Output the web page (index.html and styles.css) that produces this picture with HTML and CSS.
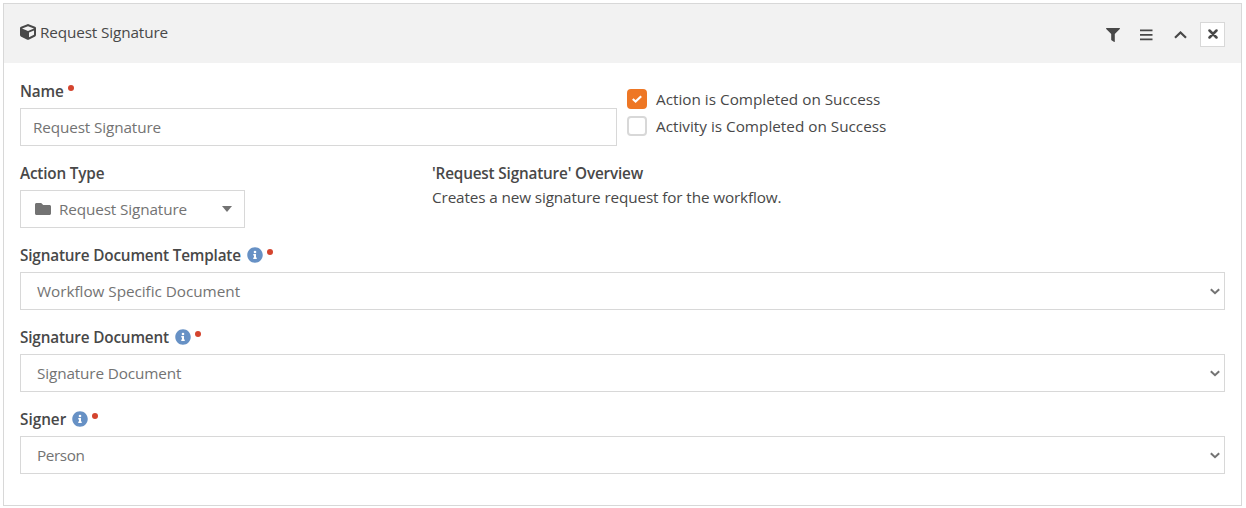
FILE: index.html
```
<!DOCTYPE html>
<html lang="en">
<head>
<meta charset="utf-8">
<title>Request Signature</title>
<link rel="stylesheet" href="styles.css">
</head>
<body>
<svg width="0" height="0" class="sprite">
  <symbol id="info" viewBox="0 0 512 512"><path fill="currentColor" d="M256 8C119 8 8 119 8 256s111 248 248 248 248-111 248-248S393 8 256 8zm0 110a42 42 0 1 1 0 84 42 42 0 0 1 0-84zm56 254c0 7-5 12-12 12h-88c-7 0-12-5-12-12v-24c0-7 5-12 12-12h12v-64h-12c-7 0-12-5-12-12v-24c0-7 5-12 12-12h64c7 0 12 5 12 12v100h12c7 0 12 5 12 12z"/></symbol>
  <symbol id="arrow" viewBox="0 0 10 7"><path fill="none" stroke="currentColor" stroke-width="2" d="M.8 1.2 5 5.2l4.200-4"/></symbol>
</svg>
<section class="panel">
  <header class="panel-header">
    <h1 class="title">
      <svg class="cube" viewBox="0 0 512 512"><path fill="currentColor" fill-rule="evenodd" d="M239 6 31 84C12 91 0 109 0 129v225c0 18 10 35 26 43l208 104c14 7 30 7 43 0l208-104c16-8 27-25 27-43V129c0-20-12-38-31-45L273 6c-11-4-23-4-34 0zM256 68l192 72v2l-192 78-192-78v-2zm32 357V275l160-65v135z"/></svg>
      <span>Request Signature</span>
    </h1>
    <div class="tools">
      <button class="tool" aria-label="Filter"><svg width="14" height="14" viewBox="0 0 14 14"><path fill="currentColor" d="M.6 0h12.800c.6 0 .8.600.4 1L8.800 6v7.400c0 .5-.6.700-1 .4L5.500 12.200a.7.7 0 0 1-.3-.5V6L.2 1C-.2.6.1 0 .6 0z"/></svg></button>
      <button class="tool" aria-label="Reorder"><svg width="13" height="12" viewBox="0 0 13 12"><path fill="currentColor" d="M0 .5h12.500v1.800H0zM0 5h12.500v1.800H0zM0 9.500h12.500v1.800H0z"/></svg></button>
      <button class="tool" aria-label="Collapse"><svg width="13" height="8" viewBox="0 0 13 8"><path fill="none" stroke="currentColor" stroke-width="2.200" d="m1 6.800 5.500-5.300L12 6.800"/></svg></button>
      <button class="tool close" aria-label="Remove"><svg width="10" height="10" viewBox="0 0 10 10"><path stroke="currentColor" stroke-width="2.500" stroke-linecap="round" d="m1.500 1.500 7 7m0-7-7 7"/></svg></button>
    </div>
  </header>
  <div class="panel-body">
    <div class="row">
      <div class="group name-group">
        <div class="label"><span>Name</span><i class="required"></i></div>
        <div class="control input"><span>Request Signature</span></div>
      </div>
      <div class="checks">
        <div class="check"><span class="box checked"><svg width="10" height="8" viewBox="0 0 10 8"><path fill="none" stroke="#fff" stroke-width="2.200" d="m.8 4 2.800 2.500L9.200 1.200"/></svg></span><span>Action is Completed on Success</span></div>
        <div class="check"><span class="box"></span><span>Activity is Completed on Success</span></div>
      </div>
    </div>
    <div class="row">
      <div class="group type-group">
        <div class="label"><span>Action Type</span></div>
        <div class="control picker">
          <svg width="16" height="12" viewBox="0 0 16 12"><path fill="currentColor" d="M1.500 0h4.700L8.200 2h6.300c.8 0 1.500.7 1.500 1.500v7c0 .8-.7 1.500-1.500 1.500h-13C.7 12 0 11.300 0 10.500v-9C0 .7.700 0 1.500 0z"/></svg>
          <span>Request Signature</span>
          <i class="caret"></i>
        </div>
      </div>
      <div class="overview">
        <div class="label"><span>'Request Signature' Overview</span></div>
        <p>Creates a new signature request for the workflow.</p>
      </div>
    </div>
    <div class="group">
      <div class="label"><span>Signature Document Template</span><svg class="info"><use href="#info"/></svg><i class="required"></i></div>
      <div class="control select"><span class="wide">Workflow Specific Document</span><svg class="arrow"><use href="#arrow"/></svg></div>
    </div>
    <div class="group">
      <div class="label"><span>Signature Document</span><svg class="info"><use href="#info"/></svg><i class="required"></i></div>
      <div class="control select"><span>Signature Document</span><svg class="arrow"><use href="#arrow"/></svg></div>
    </div>
    <div class="group">
      <div class="label short"><span>Signer</span><svg class="info"><use href="#info"/></svg><i class="required"></i></div>
      <div class="control select"><span class="tight">Person</span><svg class="arrow"><use href="#arrow"/></svg></div>
    </div>
  </div>
</section>
</body>
</html>
```
FILE: styles.css
```
* { box-sizing: border-box; }
body {
  margin: 0;
  padding: 3px 4px 2px 3px;
  height: 508px;
  overflow: hidden;
  background: #fff;
  color: #484848;
  font: 15.3px/24px "Open Sans", "Noto Sans", sans-serif;
  letter-spacing: -0.13px;
}
svg { display: block; flex: none; }
.sprite { position: absolute; }
.panel { height: 503px; border: 1px solid #d8d8d8; }
.panel-header {
  display: flex;
  justify-content: space-between;
  height: 59px;
  padding: 16px 16px 0;
  background: #f2f2f2;
}
.title {
  display: flex;
  gap: 4px;
  height: 24px;
  margin: 0;
  font-size: inherit;
  font-weight: 400;
}
.cube { width: 16px; height: 16px; margin-top: 4px; }
.tools { display: flex; gap: 9px; margin-top: 2px; }
.tool {
  display: flex;
  align-items: center;
  justify-content: center;
  width: 25px;
  height: 25px;
  padding: 0;
  border: 0;
  background: none;
  color: #484848;
}
.tool:not(.close) { padding-left: 4px; }
.close { border: 1px solid #d8d8d8; background: #fff; padding-bottom: 1px; }
.panel-body { padding: 16px 16px 0; }
.row { display: flex; }
.group { margin-bottom: 15px; }
.label {
  display: flex;
  align-items: center;
  height: 24px;
  margin-bottom: 5px;
  font-weight: 600;
  letter-spacing: -0.17px;
}
.short { letter-spacing: 0; }
.required {
  width: 6px;
  height: 6px;
  margin: -6px 0 0 4px;
  border-radius: 50%;
  background: #d4442e;
}
.info { width: 16px; height: 16px; margin-left: 6px; color: #6791c5; }
.control {
  display: flex;
  align-items: center;
  height: 38px;
  border: 1px solid #d8d8d8;
  color: #737373;
}
.name-group { width: 597px; }
.input { padding-left: 12px; }
.select { justify-content: space-between; padding: 0 4px 0 16px; }
.wide { letter-spacing: -0.04px; }
.tight { letter-spacing: -0.4px; }
.arrow { width: 10px; height: 7px; }
.checks { padding: 6px 0 0 10px; letter-spacing: 0; }
.check { display: flex; align-items: center; gap: 9px; height: 27px; }
.box {
  display: flex;
  align-items: center;
  justify-content: center;
  width: 20px;
  height: 20px;
  border: 2px solid #d8d8d8;
  border-radius: 4px;
}
.checked { border-color: #ee7725; background: #ee7725; }
.type-group { width: 225px; }
.picker { gap: 8px; padding: 0 12px 0 14px; }
.caret {
  margin-left: auto;
  border: 5px solid transparent;
  border-top: 6px solid #737373;
  border-bottom: 0;
}
.overview { margin-left: 187px; }
.overview .label { margin: 0; }
.overview p { margin: 0; }
```
